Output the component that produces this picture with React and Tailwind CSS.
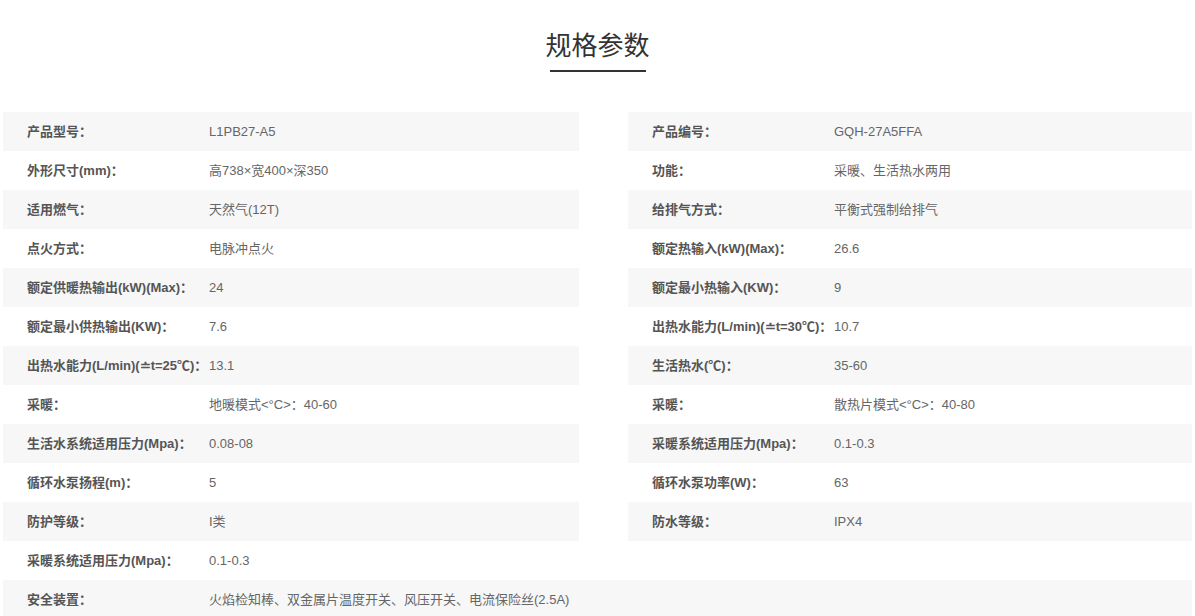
const L=[["产品型号：","L1PB27-A5"],["外形尺寸(mm)：","高738×宽400×深350"],["适用燃气：","天然气(12T)"],["点火方式：","电脉冲点火"],["额定供暖热输出(kW)(Max)：","24"],["额定最小供热输出(KW)：","7.6"],["出热水能力(L/min)(≐t=25℃)：","13.1"],["采暖：","地暖模式<°C>：40-60"],["生活水系统适用压力(Mpa)：","0.08-08"],["循环水泵扬程(m)：","5"],["防护等级：","I类"],["采暖系统适用压力(Mpa)：","0.1-0.3"]];
const R=[["产品编号：","GQH-27A5FFA"],["功能：","采暖、生活热水两用"],["给排气方式：","平衡式强制给排气"],["额定热输入(kW)(Max)：","26.6"],["额定最小热输入(KW)：","9"],["出热水能力(L/min)(≐t=30℃)：","10.7"],["生活热水(℃)：","35-60"],["采暖：","散热片模式<°C>：40-80"],["采暖系统适用压力(Mpa)：","0.1-0.3"],["循环水泵功率(W)：","63"],["防水等级：","IPX4"]];
function Row({k,v,i}){return <div className={"h-[39px] flex items-center pl-6 "+(i%2===0?"bg-[#f7f7f7]":"")}><div className="w-[182px] shrink-0 font-bold text-[#555]">{k}</div><div className="text-[#666]">{v}</div></div>}
export default function App(){return <div className="bg-white w-[1195px] h-[616px] overflow-hidden text-[13px]" style={{fontFamily:'"Liberation Sans","Noto Sans CJK SC",sans-serif'}}>
<div className="flex flex-col items-center pt-[30px]"><div className="text-[26px] text-[#333] leading-[32px]">规格参数</div><div className="w-[96px] h-[2px] bg-[#333] mt-[8px]"></div></div>
<div className="px-[3px] mt-[40px]"><div className="flex gap-[49px]"><div className="w-[576px]">{L.map((r,i)=><Row key={i} k={r[0]} v={r[1]} i={i}/>)}</div><div className="flex-1">{R.map((r,i)=><Row key={i} k={r[0]} v={r[1]} i={i}/>)}</div></div>
<Row k="安全装置：" v="火焰检知棒、双金属片温度开关、风压开关、电流保险丝(2.5A)" i={0}/></div></div>}
